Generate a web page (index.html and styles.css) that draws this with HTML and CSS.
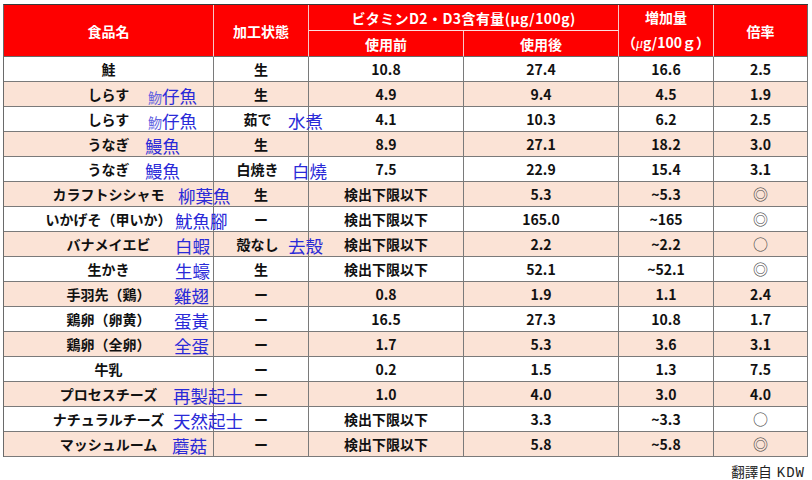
FILE: index.html
```html
<!DOCTYPE html>
<html lang="ja">
<head>
<meta charset="utf-8">
<link rel="stylesheet" href="styles.css">
</head>
<body>
<div class="page">
<table class="vd">
<colgroup>
<col class="c-name"><col class="c-proc"><col class="c-val"><col class="c-val"><col class="c-inc"><col class="c-rate">
</colgroup>
<thead>
<tr class="h1">
<th rowspan="2">食品名</th>
<th rowspan="2">加工状態</th>
<th colspan="2" class="span">ビタミンD2・D3含有量(μg/100g)</th>
<th rowspan="2" class="two"><div>増加量</div><div>（<i>μ</i>g/100ｇ）</div></th>
<th rowspan="2" class="last">倍率</th>
</tr>
<tr class="h2">
<th class="sub">使用前</th>
<th class="sub">使用後</th>
</tr>
</thead>
<tbody>
<tr><td>鮭</td><td>生</td><td>10.8</td><td>27.4</td><td>16.6</td><td>2.5</td></tr>
<tr class="pk"><td class="nm">しらす<span class="zh" style="left:144px"><small>魩</small>仔魚</span></td><td>生</td><td>4.9</td><td>9.4</td><td>4.5</td><td>1.9</td></tr>
<tr><td class="nm">しらす<span class="zh" style="left:144px"><small>魩</small>仔魚</span></td><td class="pr">茹で<span class="zh" style="left:74px">水煮</span></td><td>4.1</td><td>10.3</td><td>6.2</td><td>2.5</td></tr>
<tr class="pk"><td class="nm">うなぎ<span class="zh" style="left:141px">鰻魚</span></td><td>生</td><td>8.9</td><td>27.1</td><td>18.2</td><td>3.0</td></tr>
<tr><td class="nm">うなぎ<span class="zh" style="left:141px">鰻魚</span></td><td class="pr">白焼き<span class="zh" style="left:78px">白燒</span></td><td>7.5</td><td>22.9</td><td>15.4</td><td>3.1</td></tr>
<tr class="pk"><td class="nm">カラフトシシャモ<span class="zh" style="left:174px">柳葉魚</span></td><td>生</td><td>検出下限以下</td><td>5.3</td><td>~5.3</td><td class="sym">◎</td></tr>
<tr><td class="nm">いかげそ（甲いか）<span class="zh" style="left:171px">魷魚腳</span></td><td>ー</td><td>検出下限以下</td><td>165.0</td><td>~165</td><td class="sym">◎</td></tr>
<tr class="pk"><td class="nm">バナメイエビ<span class="zh" style="left:171px">白蝦</span></td><td class="pr">殻なし<span class="zh" style="left:74px">去殼</span></td><td>検出下限以下</td><td>2.2</td><td>~2.2</td><td class="sym">○</td></tr>
<tr><td class="nm">生かき<span class="zh" style="left:171px">生蠔</span></td><td>生</td><td>検出下限以下</td><td>52.1</td><td>~52.1</td><td class="sym">◎</td></tr>
<tr class="pk"><td class="nm">手羽先（鶏）<span class="zh" style="left:170px">雞翅</span></td><td>ー</td><td>0.8</td><td>1.9</td><td>1.1</td><td>2.4</td></tr>
<tr><td class="nm">鶏卵（卵黄）<span class="zh" style="left:170px">蛋黃</span></td><td>ー</td><td>16.5</td><td>27.3</td><td>10.8</td><td>1.7</td></tr>
<tr class="pk"><td class="nm">鶏卵（全卵）<span class="zh" style="left:170px">全蛋</span></td><td>ー</td><td>1.7</td><td>5.3</td><td>3.6</td><td>3.1</td></tr>
<tr><td>牛乳</td><td>ー</td><td>0.2</td><td>1.5</td><td>1.3</td><td>7.5</td></tr>
<tr class="pk"><td class="nm">プロセスチーズ<span class="zh" style="left:169px">再製起士</span></td><td>ー</td><td>1.0</td><td>4.0</td><td>3.0</td><td>4.0</td></tr>
<tr><td class="nm">ナチュラルチーズ<span class="zh" style="left:169px">天然起士</span></td><td>ー</td><td>検出下限以下</td><td>3.3</td><td>~3.3</td><td class="sym">○</td></tr>
<tr class="pk"><td class="nm">マッシュルーム<span class="zh" style="left:168px">蘑菇</span></td><td>ー</td><td>検出下限以下</td><td>5.8</td><td>~5.8</td><td class="sym">◎</td></tr>
</tbody>
</table>
<div class="credit">翻譯自 <span class="en">KDW</span></div>
</div>
</body>
</html>
```

FILE: styles.css
```css
* { box-sizing: border-box; }
html, body { margin: 0; padding: 0; background: #fff; }
.page {
  width: 812px;
  padding: 4px 0 0 3px;
  font-family: "Noto Sans CJK JP", "Noto Sans", sans-serif;
}
.vd {
  table-layout: fixed;
  width: 804px;
  border-collapse: separate;
  border-spacing: 0;
  border-top: 1px solid #3a3a3a;
  border-left: 1px solid #6a6a6a;
}
.c-name { width: 210px; }
.c-proc { width: 95px; }
.c-val { width: 155px; }
.c-inc { width: 95px; }
.c-rate { width: 94px; }

.vd th {
  background: #fe0000;
  color: #fff;
  font-weight: 700;
  font-size: 14px;
  line-height: 24px;
  padding: 0;
  text-align: center;
  border-right: 1px solid #f6c8c8;
  border-bottom: 1px solid #f6c8c8;
}
.vd th.span { letter-spacing: 0.4px; border-bottom: 1px solid #fde0e0; }
.vd tr.h1 th[rowspan] { border-bottom: 1px solid #6a6a6a; }
.vd tr.h2 th { border-bottom: 1px solid #6a6a6a; }
.vd th.last { border-right: 1px solid #6a6a6a; }
.vd tr.h1 { height: 24px; }
.vd tr.h2 { height: 25px; }
.vd th.two div { line-height: 25px; }
.vd th.two i { font-family: "Liberation Serif", serif; font-style: italic; font-weight: 400; }

.vd tbody tr { height: 25px; background: #fff; }
.vd tbody tr.pk { background: #fbe3d6; }
.vd td {
  padding: 0;
  text-align: center;
  font-size: 14px;
  font-weight: 700;
  color: #111;
  line-height: 24px;
  white-space: nowrap;
  border-right: 1px solid #7a7a7a;
  border-bottom: 1px solid #7a7a7a;
  position: relative;
  overflow: visible;
}
.vd td.pr { padding-right: 7px; }
.vd td.sym { font-weight: 400; color: #444; font-size: 15px; }

.zh {
  position: absolute;
  top: 1px;
  font-family: "Noto Sans CJK TC", "Noto Sans CJK JP", sans-serif;
  font-weight: 400;
  font-size: 17.5px;
  line-height: 25px;
  color: #2a2ad8;
  z-index: 2;
}
.zh small { font-size: 14px; color: #6262e0; }

.credit {
  width: 802px;
  text-align: right;
  margin-top: 6px;
  font-family: "Noto Sans CJK TC", sans-serif;
  font-size: 13.5px;
  line-height: 16px;
  color: #222;
}
.credit .en { font-family: "Liberation Mono", monospace; font-size: 14px; letter-spacing: 1px; margin-left: 2px; }
```
